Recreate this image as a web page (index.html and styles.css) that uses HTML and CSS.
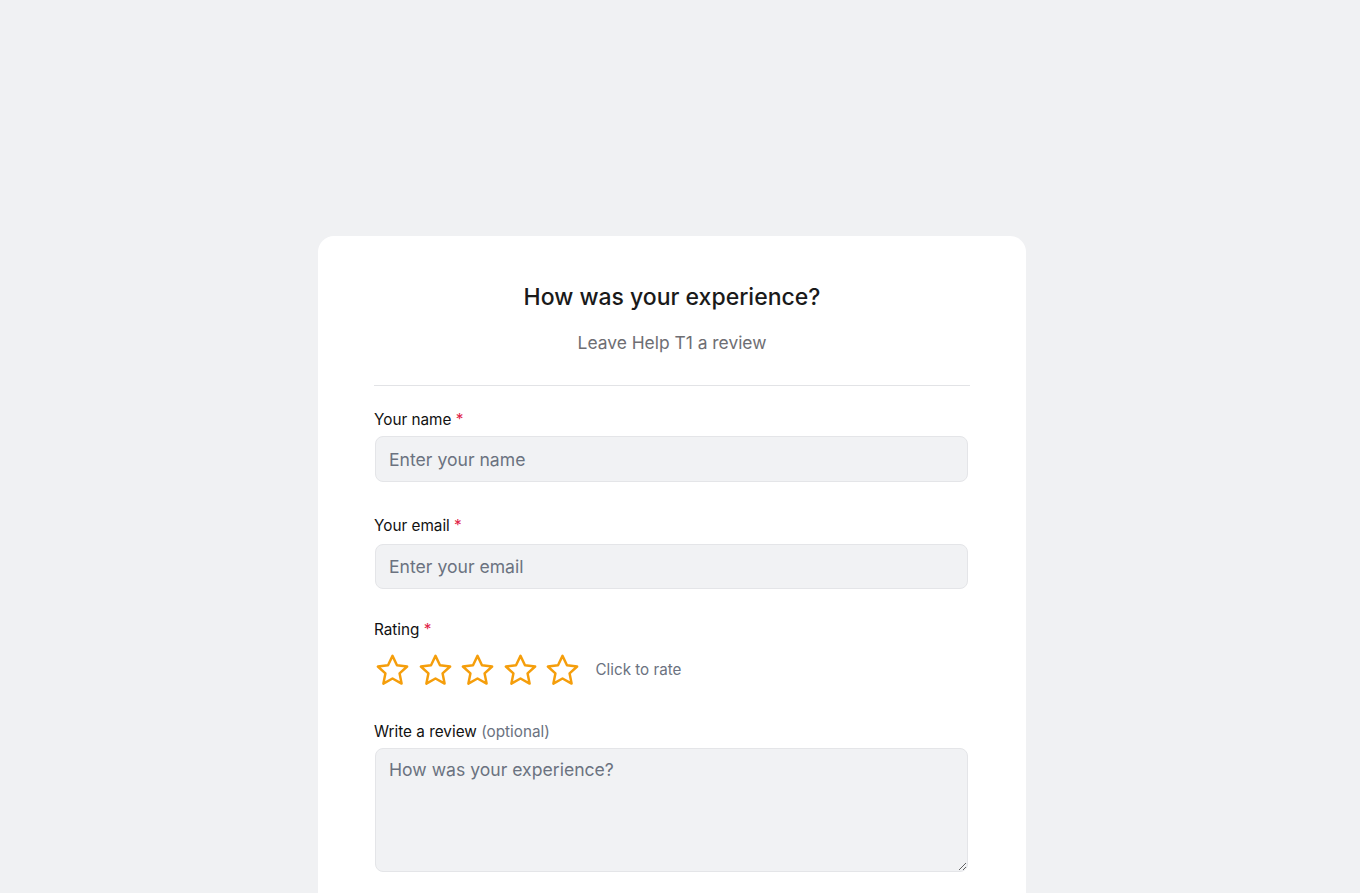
FILE: index.html
```html
<!DOCTYPE html>
<html lang="en">
<head>
<meta charset="utf-8">
<title>Review</title>
<link rel="stylesheet" href="styles.css">
</head>
<body>
<div class="page">
  <div class="card">
    <h1 class="title">How was your experience?</h1>
    <p class="subtitle">Leave Help T1 a review</p>
    <hr class="divider">
    <form class="form">
      <div class="field f-name">
        <label class="label">Your name <span class="req">*</span></label>
        <input class="input" type="text" placeholder="Enter your name">
      </div>
      <div class="field f-email">
        <label class="label">Your email <span class="req">*</span></label>
        <input class="input" type="email" placeholder="Enter your email">
      </div>
      <div class="field f-rating">
        <label class="label">Rating <span class="req">*</span></label>
        <div class="stars">
          <svg class="star" viewBox="0 0 24 24"><polygon points="12,2.5 14.9,8.6 21.5,9.4 16.6,13.9 17.9,20.5 12,17.2 6.1,20.5 7.4,13.9 2.5,9.4 9.1,8.6"/></svg>
          <svg class="star" viewBox="0 0 24 24"><polygon points="12,2.5 14.9,8.6 21.5,9.4 16.6,13.9 17.9,20.5 12,17.2 6.1,20.5 7.4,13.9 2.5,9.4 9.1,8.6"/></svg>
          <svg class="star" viewBox="0 0 24 24"><polygon points="12,2.5 14.9,8.6 21.5,9.4 16.6,13.9 17.9,20.5 12,17.2 6.1,20.5 7.4,13.9 2.5,9.4 9.1,8.6"/></svg>
          <svg class="star" viewBox="0 0 24 24"><polygon points="12,2.5 14.9,8.6 21.5,9.4 16.6,13.9 17.9,20.5 12,17.2 6.1,20.5 7.4,13.9 2.5,9.4 9.1,8.6"/></svg>
          <svg class="star" viewBox="0 0 24 24"><polygon points="12,2.5 14.9,8.6 21.5,9.4 16.6,13.9 17.9,20.5 12,17.2 6.1,20.5 7.4,13.9 2.5,9.4 9.1,8.6"/></svg>
          <span class="hint">Click to rate</span>
        </div>
      </div>
      <div class="field f-review">
        <label class="label">Write a review <span class="opt">(optional)</span></label>
        <textarea class="textarea" placeholder="How was your experience?"></textarea>
      </div>
    </form>
  </div>
</div>
</body>
</html>
```

FILE: styles.css
```css
* { box-sizing: border-box; }
html, body { margin: 0; padding: 0; }
body {
  background: #f0f1f3;
  font-family: Inter, "Liberation Sans", Arial, sans-serif;
  color: #111827;
  overflow: hidden;
  height: 893px;
}
.page {
  display: flex;
  justify-content: center;
  padding: 236px 16px 0 0;
}
.card {
  width: 708px;
  background: #ffffff;
  border-radius: 16px;
  padding: 45px 56px 40px;
  min-height: 700px;
}
.title {
  margin: 0;
  text-align: center;
  font-size: 23px;
  line-height: 32px;
  font-weight: 500;
  color: #1a1a1a;
}
.subtitle {
  margin: 17px 0 0;
  text-align: center;
  font-size: 17.4px;
  line-height: 26px;
  color: #6e6e73;
}
.divider {
  margin: 29px 0 0;
  border: 0;
  border-top: 1px solid #e2e3e6;
  height: 0;
}
.form { display: flex; flex-direction: column; }
.field { display: flex; flex-direction: column; }
.f-name { margin-top: 23px; }
.f-email { margin-top: 33px; }
.f-rating { margin-top: 30px; }
.f-review { margin-top: 32px; }
.label {
  font-size: 15.3px;
  line-height: 22px;
  color: #111111;
  font-weight: 400;
}
.req { color: #e11d48; }
.opt { color: #6b7280; }
.input, .textarea {
  width: 593px;
  margin-left: 1px;
  background: #f1f2f4;
  border: 1px solid #e4e5e8;
  border-radius: 8px;
  font-family: Inter, "Liberation Sans", Arial, sans-serif;
  font-size: 17.6px;
  color: #111827;
  outline: none;
}
.input {
  margin-top: 5px;
  height: 46px;
  padding: 0 13px;
}
.f-email .input { height: 45px; margin-top: 7px; }
.textarea {
  margin-top: 5px;
  height: 124px;
  padding: 9px 13px;
  resize: vertical;
  line-height: 24px;
}
.input::placeholder, .textarea::placeholder { color: #6b7280; opacity: 1; }
.stars {
  margin-top: 10px;
  display: flex;
  align-items: center;
  gap: 5.5px;
  height: 38px;
}
.star {
  width: 37px;
  height: 37px;
  fill: none;
  stroke: #f59e0b;
  stroke-width: 1.6;
  stroke-linejoin: round;
}
.hint {
  margin-left: 9px;
  font-size: 15.2px;
  color: #6b7280;
  position: relative;
  top: -1px;
}
```
